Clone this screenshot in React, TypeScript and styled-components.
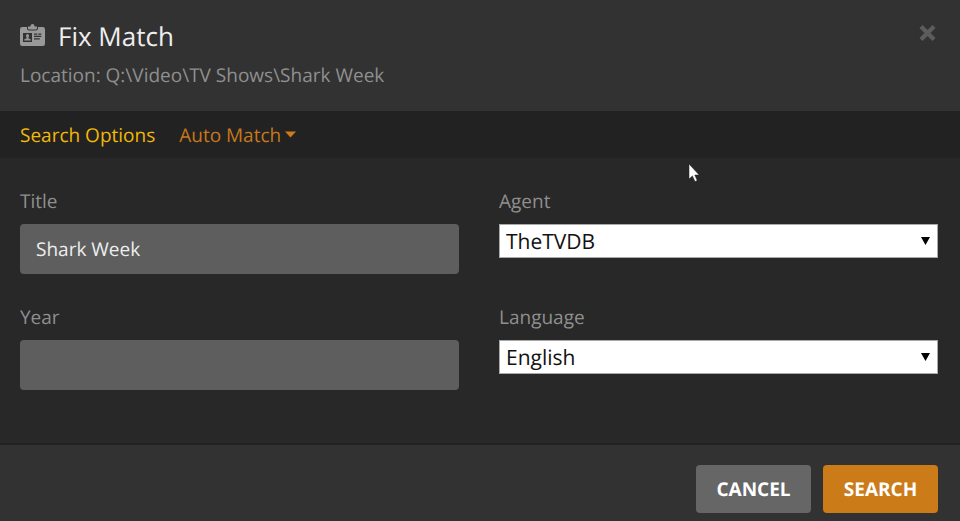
import React from "react";
import styled, { createGlobalStyle } from "styled-components";

const GlobalStyle = createGlobalStyle`
  *, *::before, *::after { box-sizing: border-box; }
  body {
    margin: 0;
    background: #323232;
    font-family: "Open Sans", "Noto Sans", sans-serif;
    font-size: 19px;
    line-height: 26px;
    color: #8f8f8f;
    text-rendering: geometricPrecision;
  }
  button, input, select { font: inherit; text-rendering: inherit; }
`;

const Dialog = styled.form`
  min-height: 100vh;
  display: flex;
  flex-direction: column;
  background: #323232;
`;

const Header = styled.header`
  display: flex;
  justify-content: space-between;
  align-items: flex-start;
  padding: 19px 23px 23px 20px;
`;

const Heading = styled.div`
  display: flex;
  flex-direction: column;
  gap: 8px;
`;

const TitleRow = styled.div`
  display: flex;
  align-items: center;
  gap: 13px;
`;

const TitleIcon = styled.svg`
  margin-bottom: 3px;
`;

const Title = styled.h1`
  margin: 0;
  font-size: 26px;
  line-height: 35px;
  font-weight: 400;
  color: #eeeeee;
`;

const Location = styled.p`
  margin: 0;
`;

const CloseButton = styled.button`
  display: flex;
  padding: 5px 0;
  border: 0;
  background: none;
  color: #5c5c5c;
  cursor: pointer;
`;

const Tabs = styled.nav`
  display: flex;
  align-items: center;
  gap: 24px;
  height: 47px;
  padding: 0 20px;
  background: #222222;
`;

const Tab = styled.button<{ $active?: boolean }>`
  display: flex;
  align-items: center;
  gap: 4px;
  padding: 0;
  border: 0;
  background: none;
  color: ${(p) => (p.$active ? "#f2b906" : "#c6781b")};
  cursor: pointer;
`;

const Body = styled.main`
  flex: 1;
  display: grid;
  grid-template-columns: 1fr 1fr;
  gap: 30px 40px;
  align-content: start;
  padding: 30px 22px 53px 20px;
  background: #282828;
`;

const Field = styled.div`
  display: flex;
  flex-direction: column;
  gap: 10px;
  min-width: 0;
`;

const TextInput = styled.input`
  width: 100%;
  height: 50px;
  padding: 0 16px;
  border: 0;
  border-radius: 4px;
  background: #5e5e5e;
  color: #eeeeee;
  outline: none;
`;

const SelectWrap = styled.div`
  display: grid;
  align-items: center;
  & > * { grid-area: 1 / 1; }
`;

const Select = styled.select`
  appearance: none;
  width: 100%;
  height: 34px;
  padding: 2px 30px 0 6px;
  border: 1px solid #a9a9a9;
  border-radius: 0;
  background: #ffffff;
  color: #111111;
  font-size: 21px;
`;

const SelectArrow = styled.svg`
  justify-self: end;
  margin-right: 8px;
  pointer-events: none;
`;

const Footer = styled.footer`
  display: flex;
  justify-content: flex-end;
  gap: 12px;
  padding: 20px 22px 8px;
  border-top: 2px solid #222222;
`;

const ActionButton = styled.button<{ $primary?: boolean }>`
  min-width: 115px;
  height: 48px;
  padding: 0 20px;
  border: 0;
  border-radius: 4px;
  background: ${(p) => (p.$primary ? "#cc7b19" : "#666666")};
  color: #ffffff;
  font-weight: 700;
  cursor: pointer;
`;

const Pointer = styled.svg`
  position: fixed;
  left: 688px;
  top: 163px;
  pointer-events: none;
`;

function BadgeIcon() {
  return (
    <TitleIcon width="25" height="22" viewBox="0 0 25 22" aria-hidden="true">
      <path
        fill="#999999"
        d="M2.2 3H7V4.2Q7 6.6 9.2 6.6H15.8Q18 6.6 18 4.2V3H22.8Q25 3 25 5.2V19.8Q25 22 22.8 22H2.2Q0 22 0 19.8V5.2Q0 3 2.2 3Z"
      />
      <path fill="#999999" d="M8 2.4H10.3Q10.7 0 12.5 0T14.7 2.4H17V4.2Q17 5.4 15.8 5.4H9.2Q8 5.4 8 4.2Z" />
      <path fill="#323232" d="M3 9H12V18H3Z" />
      <path fill="#999999" d="M6 11.6Q6 10 7.5 10T9 11.6Q9 13.2 8.3 13.8V14.3L10.8 15.4V16.6H4.2V15.4L6.7 14.3V13.8Q6 13.2 6 11.6Z" />
      <path stroke="#323232" strokeWidth="1.3" d="M14 10.2H17.3M18.3 10.2H21.3M14 12.4H21.3M14 14.8H19.8" />
    </TitleIcon>
  );
}

function SelectField({ id, label, value }: { id: string; label: string; value: string }) {
  return (
    <Field>
      <label htmlFor={id}>{label}</label>
      <SelectWrap>
        <Select id={id} defaultValue={value}>
          <option>{value}</option>
        </Select>
        <SelectArrow width="9" height="8" viewBox="0 0 9 8" aria-hidden="true">
          <path d="M0 0H9L4.5 8Z" fill="#000000" />
        </SelectArrow>
      </SelectWrap>
    </Field>
  );
}

function TextField({ id, label, value }: { id: string; label: string; value: string }) {
  return (
    <Field>
      <label htmlFor={id}>{label}</label>
      <TextInput id={id} type="text" defaultValue={value} />
    </Field>
  );
}

export default function App() {
  return (
    <>
      <GlobalStyle />
      <Dialog onSubmit={(e: React.FormEvent) => e.preventDefault()}>
        <Header>
          <Heading>
            <TitleRow>
              <BadgeIcon />
              <Title>Fix Match</Title>
            </TitleRow>
            <Location>Location: Q:\Video\TV Shows\Shark Week</Location>
          </Heading>
          <CloseButton type="button" aria-label="Close">
            <svg width="19" height="18" viewBox="0 0 19 18" aria-hidden="true">
              <path d="M3 2.5L16 15.5M16 2.5L3 15.5" stroke="currentColor" strokeWidth="4.4" />
            </svg>
          </CloseButton>
        </Header>
        <Tabs>
          <Tab type="button" $active>
            Search Options
          </Tab>
          <Tab type="button">
            Auto Match
            <svg width="11" height="7" viewBox="0 0 11 7" aria-hidden="true">
              <path d="M0 0.5H11L5.5 6.5Z" fill="#cc7b19" />
            </svg>
          </Tab>
        </Tabs>
        <Body>
          <TextField id="title" label="Title" value="Shark Week" />
          <SelectField id="agent" label="Agent" value="TheTVDB" />
          <TextField id="year" label="Year" value="" />
          <SelectField id="language" label="Language" value="English" />
        </Body>
        <Footer>
          <ActionButton type="button">CANCEL</ActionButton>
          <ActionButton type="submit" $primary>
            SEARCH
          </ActionButton>
        </Footer>
      </Dialog>
      <Pointer width="12" height="20" viewBox="0 0 12 20" aria-hidden="true">
        <path d="M1 1V16L4.4 12.9L7 18.6L9.2 17.6L6.8 12H11.2Z" fill="#ffffff" stroke="#222222" strokeWidth="0.5" />
      </Pointer>
    </>
  );
}
